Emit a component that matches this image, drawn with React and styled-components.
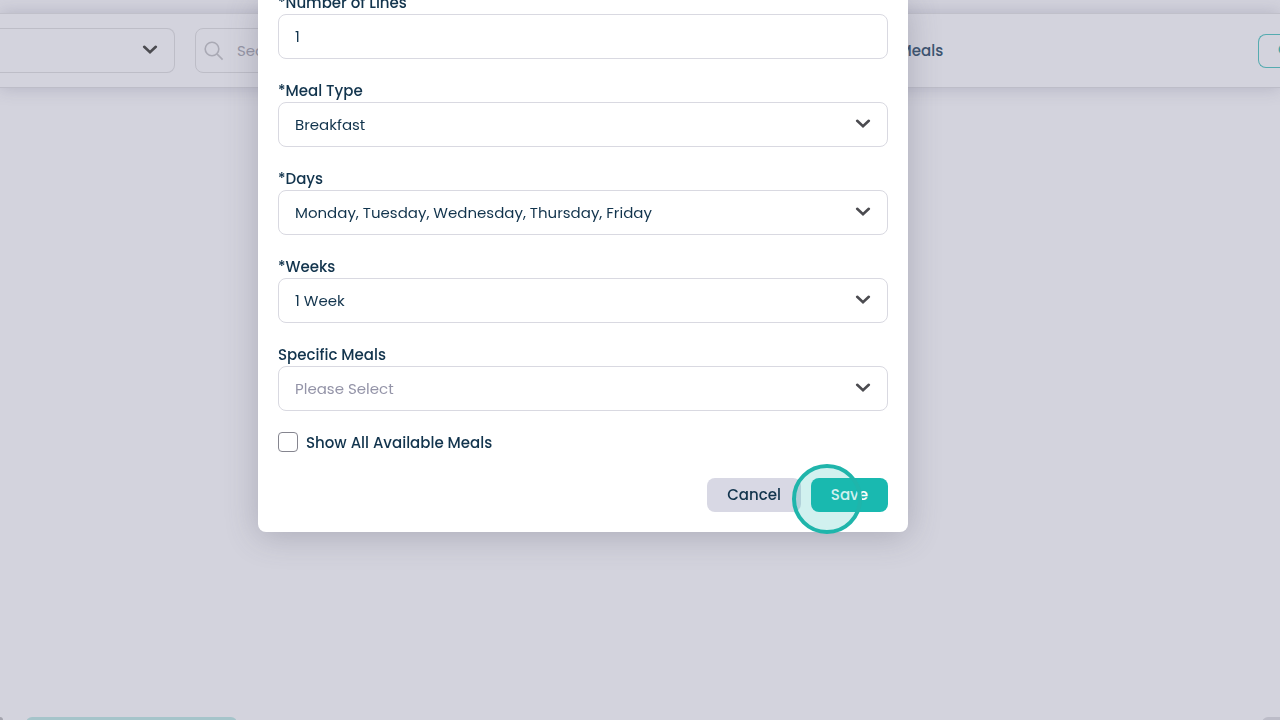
import React from "react";
import styled, { createGlobalStyle } from "styled-components";

const fields = [
    { id: "mealType", label: "*Meal Type", value: "Breakfast" },
    { id: "days", label: "*Days", value: "Monday, Tuesday, Wednesday, Thursday, Friday" },
    { id: "weeks", label: "*Weeks", value: "1 Week" },
    { id: "meals", label: "Specific Meals", value: "Please Select", empty: true },
];

const Chevron = () => (
    <ChevronIcon viewBox="0 0 16 10" aria-hidden="true">
        <path d="M2.2 1.8 L8 7.2 L13.8 1.8" />
    </ChevronIcon>
);

const App = () => {
    return (
        <Page>
            <GlobalStyle />
            <TopBar />
            <Toolbar>
                <MenuPicker>
                    <MenuSelect aria-label="Menu" />
                    <Chevron />
                </MenuPicker>
                <Search>
                    <SearchIcon viewBox="0 0 20 20" aria-hidden="true">
                        <circle cx="8" cy="8" r="6.8" />
                        <path d="M12.9 12.9 L18.6 18.6" />
                    </SearchIcon>
                    <SearchInput type="search" placeholder="Search" aria-label="Search" />
                </Search>
                <CheckLabel $muted>
                    <Checkbox type="checkbox" />
                    Show All Available Meals
                </CheckLabel>
                <OutlineButton type="button">Create</OutlineButton>
            </Toolbar>
            <Content />
            <BottomBar>
                <Corner />
                <Block />
                <Corner $right />
            </BottomBar>

            <Overlay>
                <Modal role="dialog" aria-label="Add meals">
                    <Form onSubmit={(e) => e.preventDefault()}>
                        <Field>
                            <Label htmlFor="lines">*Number of Lines</Label>
                            <TextInput id="lines" defaultValue="1" />
                        </Field>
                        {fields.map((field) => (
                            <Field key={field.id}>
                                <Label htmlFor={field.id}>{field.label}</Label>
                                <SelectWrap>
                                    <Select id={field.id} $empty={field.empty}>
                                        <option>{field.value}</option>
                                    </Select>
                                    <Chevron />
                                </SelectWrap>
                            </Field>
                        ))}
                        <CheckLabel>
                            <Checkbox type="checkbox" />
                            Show All Available Meals
                        </CheckLabel>
                        <Actions>
                            <Button type="button">Cancel</Button>
                            <SaveWrap>
                                <Button type="submit" $primary>Save</Button>
                                <ClickRing />
                            </SaveWrap>
                        </Actions>
                    </Form>
                </Modal>
            </Overlay>
        </Page>
    );
};

const GlobalStyle = createGlobalStyle`
    * {
        box-sizing: border-box;
    }
    body {
        margin: 0;
        background: #d3d3dd;
    }
    body, button, input, select {
        font-family: Poppins, Inter, sans-serif;
        font-size: 15px;
        color: #12344d;
    }
`;

const Page = styled.div`
    display: flex;
    flex-direction: column;
    height: 100vh;
    overflow: hidden;
`;

const TopBar = styled.header`
    height: 13px;
    flex-shrink: 0;
`;

const Toolbar = styled.div`
    display: flex;
    align-items: center;
    gap: 20px;
    flex-shrink: 0;
    height: 75px;
    background: #d3d3dd;
    border-top: 1px solid #c0c0ca;
    border-bottom: 1px solid #bdbdc8;
    box-shadow: 0 0 16px rgba(80, 80, 110, 0.25);
`;

const ChevronIcon = styled.svg`
    position: absolute;
    right: 17px;
    top: 17px;
    width: 16px;
    height: 10px;
    fill: none;
    stroke: #4b4b50;
    stroke-width: 2.6;
    stroke-linecap: round;
    pointer-events: none;
`;

/* the picker runs in from the left edge of the window */
const MenuPicker = styled.div`
    position: relative;
    width: 175px;
    flex-shrink: 0;
`;

const MenuSelect = styled.select`
    display: block;
    appearance: none;
    width: 100%;
    height: 45px;
    background: transparent;
    border: 1px solid #bdbdc7;
    border-left: 0;
    border-radius: 0 8px 8px 0;
`;

const Search = styled.div`
    display: flex;
    align-items: center;
    gap: 13px;
    width: 514px;
    height: 45px;
    padding: 0 8px;
    border: 1px solid #bdbdc7;
    border-radius: 8px;
`;

const SearchIcon = styled.svg`
    width: 20px;
    height: 20px;
    flex-shrink: 0;
    fill: none;
    stroke: #a9a9b4;
    stroke-width: 1.6;
`;

const SearchInput = styled.input`
    flex: 1;
    min-width: 0;
    padding: 0;
    border: 0;
    background: transparent;
    &::placeholder {
        color: #9696a6;
    }
`;

const CheckLabel = styled.label`
    display: flex;
    align-items: center;
    gap: 8px;
    height: 22px;
    font-weight: 500;
    white-space: nowrap;
    color: ${(p) => (p.$muted ? "#3c5470" : "#12344d")};
`;

const Checkbox = styled.input`
    appearance: none;
    width: 20px;
    height: 20px;
    margin: 0;
    background: #fff;
    border: 1px solid #85858f;
    border-radius: 4px;
`;

const OutlineButton = styled.button`
    flex: 0 0 22px;
    height: 34px;
    margin-left: auto;
    padding: 0 0 2px 19px;
    overflow: hidden;
    text-align: left;
    font-weight: 500;
    color: #3fa5a9;
    background: transparent;
    border: 1px solid #55abb0;
    border-right: 0;
    border-radius: 8px 0 0 8px;
`;

const Content = styled.main`
    flex: 1;
`;

const BottomBar = styled.footer`
    display: flex;
    justify-content: space-between;
    height: 3px;
    overflow: hidden;
`;

const Corner = styled.div`
    width: ${(p) => (p.$right ? "18px" : "3px")};
    height: 20px;
    background: ${(p) => (p.$right ? "#bcbcc8" : "#a4a4ae")};
    border-radius: ${(p) => (p.$right ? "6px 0 0 0" : "0 4px 0 0")};
`;

const Block = styled.div`
    width: 211px;
    height: 20px;
    margin: 0 auto 0 23px;
    background: #a5c4ca;
    border-radius: 6px;
`;

const Overlay = styled.div`
    position: fixed;
    inset: 0;
    display: flex;
    justify-content: center;
    align-items: flex-start;
    padding-right: 114px;
`;

const Modal = styled.div`
    width: 650px;
    background: #fff;
    border-radius: 0 0 8px 8px;
    box-shadow: 0 4px 32px rgba(80, 80, 100, 0.3);
    clip-path: inset(0 -60px -60px -60px);
`;

/* scrolled a little past the first label */
const Form = styled.form`
    display: flex;
    flex-direction: column;
    gap: 20px;
    margin-top: -9px;
    padding: 0 20px 20px;
`;

const Field = styled.div`
    display: flex;
    flex-direction: column;
`;

const Label = styled.label`
    line-height: 23px;
    font-weight: 500;
`;

const TextInput = styled.input`
    height: 45px;
    padding: 0 16px;
    background: #fff;
    border: 1px solid #d9d9e1;
    border-radius: 8px;
`;

const SelectWrap = styled.div`
    position: relative;
`;

const Select = styled.select`
    display: block;
    appearance: none;
    width: 100%;
    height: 45px;
    padding: 0 40px 0 16px;
    color: ${(p) => (p.$empty ? "#9494a8" : "#12344d")};
    background: #fff;
    border: 1px solid #d9d9e1;
    border-radius: 8px;
`;

const Actions = styled.div`
    display: flex;
    justify-content: flex-end;
    gap: 10px;
    padding-top: 5px;
`;

const Button = styled.button`
    height: 34px;
    padding: 0 20px 2px;
    font-weight: 500;
    color: ${(p) => (p.$primary ? "#fff" : "#12344d")};
    background: ${(p) => (p.$primary ? "#19b9b0" : "#d8d8e4")};
    border: 0;
    border-radius: 8px;
`;

const SaveWrap = styled.div`
    position: relative;
`;

const ClickRing = styled.span`
    position: absolute;
    left: -19px;
    top: -14px;
    width: 70px;
    height: 70px;
    border: 4px solid #1fb5ab;
    border-radius: 50%;
    background: rgba(25, 185, 176, 0.2);
    pointer-events: none;
`;

export default App;
